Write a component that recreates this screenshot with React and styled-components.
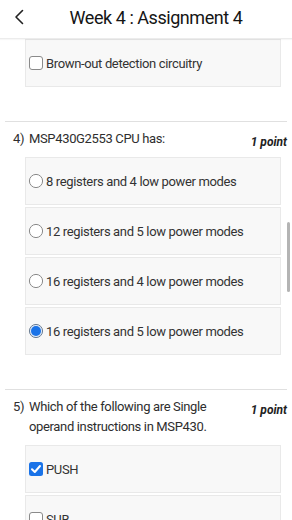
import React from "react";
import styled, { createGlobalStyle } from "styled-components";

const Global = createGlobalStyle`
  html, body { margin: 0; padding: 0; background: #fff; }
  body { font-family: Roboto, "Noto Sans", Arial, sans-serif; }
  * { box-sizing: border-box; }
`;

const Page = styled.div`
  width: 292px;
  height: 520px;
  overflow: hidden;
  position: relative;
  background: #fff;
`;

const Header = styled.div`
  height: 39px;
  display: flex;
  align-items: center;
  justify-content: center;
  position: relative;
  border-bottom: 1px solid #ececec;
  box-shadow: 0 1px 1px rgba(0, 0, 0, 0.03);
`;

const Back = styled.button`
  position: absolute;
  left: 11px;
  top: 7px;
  width: 16px;
  height: 20px;
  padding: 0;
  border: none;
  background: none;
  display: flex;
  align-items: center;
  justify-content: center;
`;

const Title = styled.h1`
  margin: 0 0 4px 20px;
  font-size: 18px;
  font-weight: 400;
  color: #151515;
  letter-spacing: -0.45px;
`;

const Content = styled.div`
  padding: 0 5px;
`;

const OptionList = styled.div`
  display: flex;
  flex-direction: column;
  gap: 2px;
  margin: ${(p) => (p.$first ? "0" : "8px")} 6px 0 20px;
`;

const Option = styled.div`
  height: 48px;
  display: flex;
  align-items: center;
  gap: 2px;
  padding-left: 2px;
  background: #f8f8f8;
  border: 1px solid #e9e9e9;
  font-size: 13px;
  letter-spacing: -0.35px;
  color: #333;
`;

const Question = styled.section`
  margin-top: 34px;
  border-top: 1px solid #e0e0e0;
  padding-top: 7px;
`;

const QHead = styled.div`
  display: flex;
  align-items: flex-start;
  padding-left: 8px;
  font-size: 13px;
  letter-spacing: -0.35px;
  line-height: 20px;
  color: #2e2e2e;
`;

const QNum = styled.span`
  width: 16px;
  flex: none;
`;

const QText = styled.span`
  flex: 1;
  max-width: ${(p) => p.$max || "none"};
`;

const Points = styled.span`
  margin-left: auto;
  margin-top: 7px;
  line-height: 13px;
  font-weight: 700;
  font-style: italic;
  font-size: 12px;
  letter-spacing: 0;
  color: #222;
  white-space: nowrap;
`;

const Scrollbar = styled.div`
  position: absolute;
  right: 2px;
  top: 222px;
  width: 3px;
  height: 70px;
  border-radius: 2px;
  background: #b4b4b4;
`;

const Checkbox = ({ checked }) =>
  checked ? (
    <svg width="16" height="16" viewBox="0 0 16 16">
      <rect x="1" y="1" width="14" height="14" rx="2.5" fill="#1a73e8" />
      <path d="M4 8.3 L6.8 11 L12 5" fill="none" stroke="#fff" strokeWidth="2" strokeLinecap="round" strokeLinejoin="round" />
    </svg>
  ) : (
    <svg width="16" height="16" viewBox="0 0 16 16">
      <rect x="1.5" y="1.5" width="13" height="13" rx="2.5" fill="#fff" stroke="#8a8a8a" strokeWidth="1" />
    </svg>
  );

const Radio = ({ checked }) => (
  <svg width="16" height="16" viewBox="0 0 16 16">
    <circle cx="8" cy="8" r="6.6" fill={checked ? "#d9e6f7" : "#fff"} stroke={checked ? "#6d7f94" : "#8a8a8a"} strokeWidth="1" />
    {checked && <circle cx="8" cy="8" r="5" fill="#1a73e8" />}
  </svg>
);

const q4 = [
  { t: "8 registers and 4 low power modes", c: false },
  { t: "12 registers and 5 low power modes", c: false },
  { t: "16 registers and 4 low power modes", c: false },
  { t: "16 registers and 5 low power modes", c: true },
];

const q5 = [
  { t: "PUSH", c: true },
  { t: "SUB", c: false },
];

export default function App() {
  return (
    <Page>
      <Global />
      <Header>
        <Back aria-label="Back">
          <svg width="10" height="16" viewBox="0 0 10 16">
            <path d="M8.5 1.5 L2 8 L8.5 14.5" fill="none" stroke="#222" strokeWidth="1.6" strokeLinecap="round" strokeLinejoin="round" />
          </svg>
        </Back>
        <Title>Week 4 : Assignment 4</Title>
      </Header>
      <Content>
        <OptionList $first>
          <Option>
            <Checkbox />
            <span>Brown-out detection circuitry</span>
          </Option>
        </OptionList>

        <Question>
          <QHead>
            <QNum>4)</QNum>
            <QText>MSP430G2553 CPU has:</QText>
            <Points>1 point</Points>
          </QHead>
          <OptionList>
            {q4.map((o) => (
              <Option key={o.t}>
                <Radio checked={o.c} />
                <span>{o.t}</span>
              </Option>
            ))}
          </OptionList>
        </Question>

        <Question>
          <QHead>
            <QNum>5)</QNum>
            <QText $max="200px">Which of the following are Single operand instructions in MSP430.</QText>
            <Points>1 point</Points>
          </QHead>
          <OptionList>
            {q5.map((o) => (
              <Option key={o.t}>
                <Checkbox checked={o.c} />
                <span>{o.t}</span>
              </Option>
            ))}
          </OptionList>
        </Question>
      </Content>
      <Scrollbar />
    </Page>
  );
}
